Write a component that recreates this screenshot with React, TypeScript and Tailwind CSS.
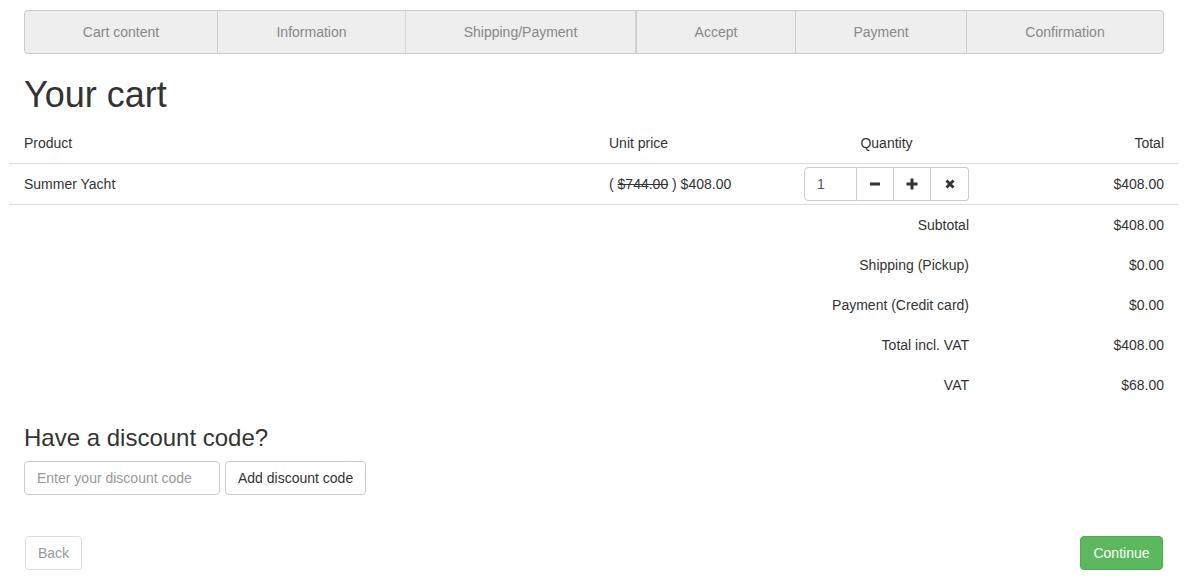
import React from 'react';

const steps = [
  { label: 'Cart content', w: 'w-[192px]' },
  { label: 'Information', w: 'w-[188px]' },
  { label: 'Shipping/Payment', w: 'w-[231px]' },
  { label: 'Accept', w: 'w-[159px]' },
  { label: 'Payment', w: 'w-[171px]' },
  { label: 'Confirmation', w: 'flex-1' },
];

const summary = [
  { label: 'Subtotal', value: '$408.00' },
  { label: 'Shipping (Pickup)', value: '$0.00' },
  { label: 'Payment (Credit card)', value: '$0.00' },
  { label: 'Total incl. VAT', value: '$408.00' },
  { label: 'VAT', value: '$68.00' },
];

const MinusIcon = () => (
  <svg width="12" height="12" viewBox="0 0 12 12">
    <rect x="1" y="4.5" width="10" height="3" fill="#333" />
  </svg>
);

const PlusIcon = () => (
  <svg width="12" height="12" viewBox="0 0 12 12">
    <rect x="0.5" y="4.5" width="11" height="3" fill="#333" />
    <rect x="4.5" y="0.5" width="3" height="11" fill="#333" />
  </svg>
);

const RemoveIcon = () => (
  <svg width="12" height="12" viewBox="0 0 12 12">
    <path d="M1.5 3.5 L3.5 1.5 L6 4 L8.5 1.5 L10.5 3.5 L8 6 L10.5 8.5 L8.5 10.5 L6 8 L3.5 10.5 L1.5 8.5 L4 6 Z" fill="#333" />
  </svg>
);

export default function App() {
  return (
    <div className="min-h-[584px] bg-white text-[14px] text-[#333] font-['Liberation_Sans',Arial,sans-serif]">
      <div className="ml-6 w-[1140px] pt-[10px]">
        {/* Checkout steps */}
        <div className="flex h-[44px] rounded border border-[#ccc] bg-[#eee] overflow-hidden">
          {steps.map((s, i) => (
            <div
              key={s.label}
              className={`${s.w} flex items-center justify-center pt-px text-[#888] ${i > 0 ? 'border-l border-[#ccc]' : ''} ${i === 2 ? 'border-r border-[#d6d6d6]' : ''}`}
            >
              {s.label}
            </div>
          ))}
        </div>

        <h1 className="mt-[21px] text-[36px] leading-[40px] font-normal text-[#333]">Your cart</h1>

        {/* Cart table */}
        <div className="-mx-[15px] mt-2 w-[1170px]">
          <div className="grid h-[41px] grid-cols-[585px_195px_195px_195px] items-center border-b border-[#ddd]">
            <div className="px-[15px]">Product</div>
            <div className="px-[15px]">Unit price</div>
            <div className="px-[15px] text-center">Quantity</div>
            <div className="px-[15px] text-right">Total</div>
          </div>
          <div className="grid h-[41px] grid-cols-[585px_195px_195px_195px] items-center border-b border-[#ddd]">
            <div className="px-[15px]">Summer Yacht</div>
            <div className="px-[15px]">
              ( <span className="line-through">$744.00</span> ) $408.00
            </div>
            <div className="px-[15px]">
              <div className="flex h-[34px] w-[165px]">
                <input
                  defaultValue="1"
                  className="w-[53px] rounded-l border border-[#ccc] px-3 text-[14px] text-[#555] outline-none"
                />
                <button className="flex w-[37px] items-center justify-center border border-l-0 border-[#ccc] bg-white">
                  <MinusIcon />
                </button>
                <button className="flex w-[37px] items-center justify-center border border-l-0 border-[#ccc] bg-white">
                  <PlusIcon />
                </button>
                <button className="flex w-[38px] items-center justify-center rounded-r border border-l-0 border-[#ccc] bg-white">
                  <RemoveIcon />
                </button>
              </div>
            </div>
            <div className="px-[15px] text-right">$408.00</div>
          </div>
          {summary.map((row) => (
            <div key={row.label} className="grid h-10 grid-cols-[585px_195px_195px_195px] items-center">
              <div />
              <div />
              <div className="px-[15px] text-right">{row.label}</div>
              <div className="px-[15px] text-right">{row.value}</div>
            </div>
          ))}
        </div>

        {/* Discount code */}
        <h3 className="mt-[19px] text-[24px] leading-[27px] font-normal text-[#333]">Have a discount code?</h3>
        <div className="mt-[10px] flex gap-[5px]">
          <input
            placeholder="Enter your discount code"
            className="h-[34px] w-[196px] rounded border border-[#ccc] px-3 text-[14px] text-[#555] placeholder:text-[#999] outline-none"
          />
          <button className="h-[34px] rounded border border-[#ccc] bg-white px-3 text-[14px] text-[#333]">
            Add discount code
          </button>
        </div>

        {/* Navigation */}
        <div className="mt-[41px] flex items-center justify-between">
          <button className="ml-px h-[34px] w-[57px] rounded border border-[#ddd] bg-white text-[14px] text-[#999]">
            Back
          </button>
          <button className="mr-px h-[34px] w-[83px] rounded border border-[#4cae4c] bg-[#5cb85c] text-[14px] text-white">
            Continue
          </button>
        </div>
      </div>
    </div>
  );
}
